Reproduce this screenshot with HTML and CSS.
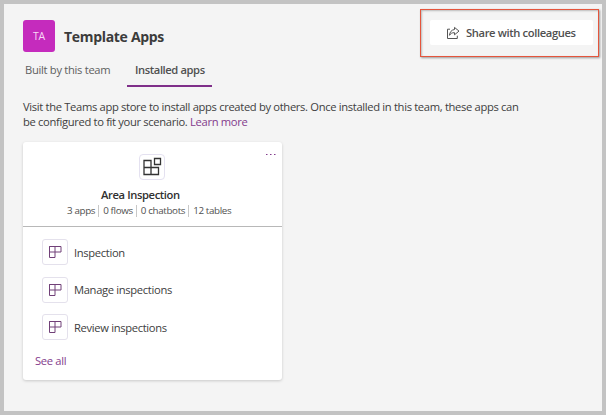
FILE: index.html
```
<!DOCTYPE html>
<html lang="en">
<head>
<meta charset="utf-8">
<title>Template Apps</title>
<link rel="stylesheet" href="styles.css">
</head>
<body>
<main class="frame">
  <header class="header">
    <div class="avatar">TA</div>
    <h1 class="title">Template Apps</h1>
    <div class="callout">
      <button class="share">
        <svg class="share-icon" viewBox="0 0 14 14" width="14" height="14"><path d="M4 3.200H1.500v9.300h9.800V9.700M8.500 1.400l4.500 3.700-4.500 3.700V6.700C6 6.600 4.500 7.500 3.500 9.300c.2-3 1.800-5.400 5-5.800z"/></svg>
        <span>Share with colleagues</span>
      </button>
    </div>
  </header>
  <nav class="tabs">
    <a class="tab">Built by this team</a>
    <a class="tab tab-active">Installed apps</a>
  </nav>
  <p class="intro">Visit the Teams app store to install apps created by others. Once installed in this team, these apps can<br>be configured to fit your scenario. <a class="link">Learn more</a></p>
  <section class="card">
    <div class="card-head">
      <svg class="more" viewBox="0 0 10 2" width="10" height="2"><path d="M0 .5h1.500M4 .5h1.500M8 .5h1.500"/></svg>
      <div class="tile">
        <svg viewBox="0 0 20 20" width="20" height="20"><path d="M2 3.500h7v14H2zM2 10.500h14.500v7H2zM9 10.500v7M12.500 1.500h6v6h-6z"/></svg>
      </div>
      <h2 class="card-title">Area Inspection</h2>
      <div class="stats"><span>3 apps</span><span>0 flows</span><span>0 chatbots</span><span>12 tables</span></div>
    </div>
    <ul class="apps">
      <li><div class="app-icon"><svg viewBox="0 0 14 14" width="14" height="14"><path d="M1.500 1.500h11.500v5.500H1.500zM1.500 1.500h5.500v11H1.500z"/></svg></div><span>Inspection</span></li>
      <li><div class="app-icon"><svg viewBox="0 0 14 14" width="14" height="14"><path d="M1.500 1.500h11.500v5.500H1.500zM1.500 1.500h5.500v11H1.500z"/></svg></div><span>Manage inspections</span></li>
      <li><div class="app-icon"><svg viewBox="0 0 14 14" width="14" height="14"><path d="M1.500 1.500h11.500v5.500H1.500zM1.500 1.500h5.500v11H1.500z"/></svg></div><span>Review inspections</span></li>
    </ul>
    <a class="link see-all">See all</a>
  </section>
</main>
</body>
</html>
```
FILE: styles.css
```
* { box-sizing: border-box; }
body { margin: 0; font: 11.2px/15px "Open Sans", "Noto Sans", sans-serif; letter-spacing: -.33px; color: #404040; }
.frame { width: 606px; height: 415px; border: 4px solid #c3c3c3; background: #f4f4f4; padding-left: 19px; overflow: hidden; }
.header { display: flex; height: 54px; }
.avatar { width: 32px; height: 32px; margin-top: 16px; border-radius: 3px; background: #c52bbd; color: #f8d9f5; font-size: 10.5px; line-height: 33px; text-align: center; }
.title { margin: 22px 0 0 9px; font-size: 14px; line-height: 22px; font-weight: 700; letter-spacing: -.31px; color: #3b3b3b; white-space: nowrap; }
.callout { width: 179px; height: 48px; margin: 5px 3px 0 auto; padding: 10px 5px 0 9px; border: 1px solid #e5553c; box-shadow: 1px 1px 2px #999, inset 1px 1px 2px #bbb; }
.share { display: flex; align-items: center; width: 163px; height: 25px; padding: 0 0 0 16px; border: 0; border-radius: 2px; background: #fff; font: 600 11.2px/25px "Open Sans", "Noto Sans", sans-serif; letter-spacing: -.37px; color: #505050; white-space: nowrap; }
.share-icon { margin-right: 6px; flex: none; }
svg { display: block; fill: none; stroke: #555; stroke-width: 1; }
.tabs { display: flex; height: 29px; }
.tab { width: 104px; height: 29px; padding: 4px 0 0 2px; line-height: 16px; letter-spacing: -.3px; color: #606060; white-space: nowrap; }
.tab-active { width: 85px; padding-left: 8px; border-bottom: 2px solid #7f2f89; font-weight: 600; letter-spacing: -.4px; color: #505050; }
.intro { margin: 12px 0 0; line-height: 15px; white-space: nowrap; }
.link { color: #833b8c; }
.card { width: 259px; height: 238px; margin-top: 13px; background: #fff; border-radius: 3px; box-shadow: 0 1px 3px rgba(0,0,0,.18); }
.card-head { position: relative; height: 85px; padding-top: 12px; border-bottom: 1px solid #b8b8b8; }
.more { position: absolute; right: 6px; top: 12px; stroke: #833b8c; }
.tile { width: 26px; height: 26px; margin: 0 0 0 116px; padding: 2px; border: 1px solid #e4e1f0; border-radius: 4px; }
.tile svg { stroke: #333; stroke-width: 1.3; }
.card-title { margin: 7px 0 0 78px; font-size: 11.2px; line-height: 16px; font-weight: 600; letter-spacing: -.38px; color: #303030; }
.stats { display: flex; align-items: center; height: 16px; margin-left: 44px; font-size: 9.8px; line-height: 12px; letter-spacing: -.35px; color: #505050; white-space: nowrap; }
.stats span + span { margin-left: 3px; padding-left: 4px; border-left: 1px solid #c8c8c8; }
.apps { list-style: none; margin: 12px 0 0; padding: 0 0 0 19px; display: grid; row-gap: 11.5px; }
.apps li { display: flex; align-items: center; height: 26px; white-space: nowrap; }
.app-icon { width: 26px; height: 26px; margin-right: 6px; padding: 5px; border: 1px solid #e4e1ec; border-radius: 3px; }
.app-icon svg { stroke: #714078; }
.see-all { display: block; margin: 13px 0 0 12px; }
```
